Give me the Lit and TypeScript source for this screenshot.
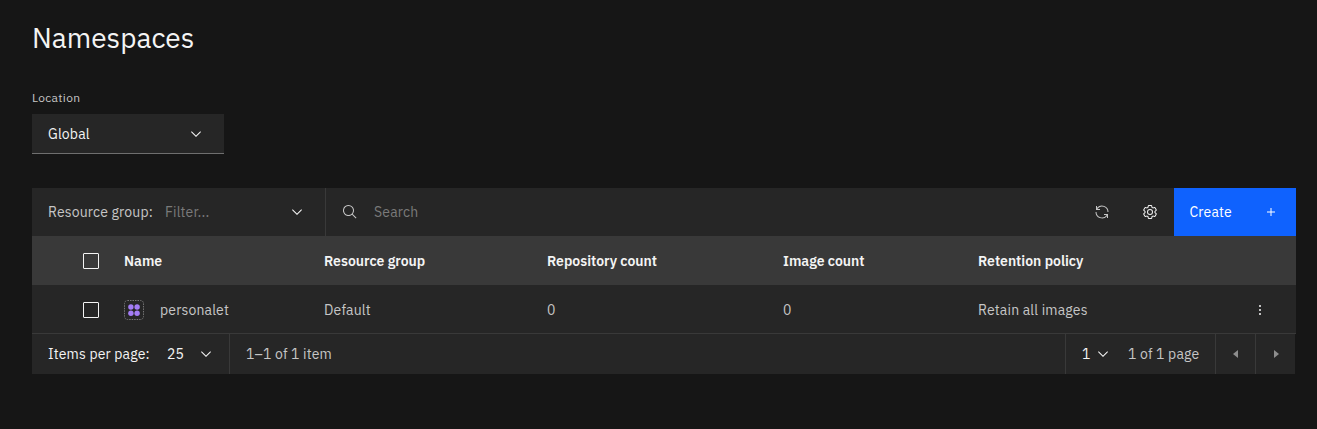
import { LitElement, html, css, svg } from "lit";
import { customElement } from "lit/decorators.js";

const chevron = html`<svg class="icon" viewBox="0 0 16 16"><path d="M8 11L3 6 3.7 5.3 8 9.6 12.3 5.3 13 6z"/></svg>`;
const icon32 = (d: string) => html`<svg class="icon" viewBox="0 0 32 32">${svg`<path d=${d} />`}</svg>`;

const SEARCH = "M29,27.5859l-7.5521-7.5521a11.0177,11.0177,0,1,0-1.4141,1.4141L27.5859,29ZM4,13a9,9,0,1,1,9,9A9.01,9.01,0,0,1,4,13Z";
const RENEW = "M12 10H6.78A11 11 0 0 1 27 16h2A13 13 0 0 0 6 7.68V4H4v8h8zM20 22h5.22A11 11 0 0 1 5 16H3a13 13 0 0 0 23 8.32V28h2V20H20z";
const SETTINGS = "M27,16.76c0-.25,0-.5,0-.76s0-.51,0-.77l1.92-1.68A2,2,0,0,0,29.3,11L26.94,7a2,2,0,0,0-1.73-1,2,2,0,0,0-.64.1l-2.43.82a11.35,11.35,0,0,0-1.31-.75l-.51-2.52a2,2,0,0,0-2-1.61H13.64a2,2,0,0,0-2,1.61l-.51,2.52a11.48,11.48,0,0,0-1.32.75L7.43,6.06A2,2,0,0,0,6.79,6,2,2,0,0,0,5.06,7L2.7,11a2,2,0,0,0,.41,2.51L5,15.24c0,.25,0,.5,0,.76s0,.51,0,.77L3.11,18.45A2,2,0,0,0,2.7,21L5.06,25a2,2,0,0,0,1.73,1,2,2,0,0,0,.64-.1l2.43-.82a11.35,11.35,0,0,0,1.31.75l.51,2.52a2,2,0,0,0,2,1.61h4.72a2,2,0,0,0,2-1.61l.51-2.52a11.48,11.48,0,0,0,1.32-.75l2.42.82a2,2,0,0,0,.64.1,2,2,0,0,0,1.73-1L29.3,21a2,2,0,0,0-.41-2.51ZM25.21,24l-3.43-1.16a8.86,8.86,0,0,1-2.71,1.57L18.36,28H13.64l-.71-3.55a9.36,9.36,0,0,1-2.7-1.57L6.79,24,4.43,20l2.72-2.4a8.9,8.9,0,0,1,0-3.13L4.43,12,6.79,8l3.43,1.16a8.86,8.86,0,0,1,2.71-1.57L13.64,4h4.72l.71,3.55a9.36,9.36,0,0,1,2.7,1.57L25.21,8,27.57,12l-2.72,2.4a8.9,8.9,0,0,1,0,3.13L27.57,20ZM16,22a6,6,0,1,1,6-6A5.94,5.94,0,0,1,16,22Zm0-10a3.91,3.91,0,0,0-4,4,3.91,3.91,0,0,0,4,4,3.91,3.91,0,0,0,4-4A3.91,3.91,0,0,0,16,12Z";
const ADD = "M17 15V8h-2v7H8v2h7v7h2v-7h7v-2z";
const CARET_LEFT = "M20 24L10 16 20 8z";
const CARET_RIGHT = "M12 8L22 16 12 24z";

@customElement("app-root")
export class AppRoot extends LitElement {
  static styles = css`
    :host {
      display: block;
      box-sizing: border-box;
      height: 429px;
      padding: 20px 21px 0 32px;
      background: #161616;
      color: #f4f4f4;
      font: 14px/18px "IBM Plex Sans", Roboto, "Liberation Sans", sans-serif;
      letter-spacing: 0.16px;
      white-space: nowrap;
      overflow: hidden;
    }
    * { box-sizing: border-box; }
    .icon { display: block; width: 16px; height: 16px; fill: currentColor; flex: none; }
    h1 { margin: 0; font-size: 28px; line-height: 36px; font-weight: 400; letter-spacing: 0; }
    .label { margin: 34px 0 8px; font-size: 12px; line-height: 16px; color: #c6c6c6; letter-spacing: 0.32px; }
    .select {
      display: flex; align-items: center; justify-content: space-between;
      width: 192px; height: 40px; padding: 0 20px 0 16px;
      background: #262626; border-bottom: 1px solid #6f6f6f;
    }
    .toolbar { display: flex; margin-top: 34px; height: 48px; background: #262626; }
    .filter {
      display: flex; align-items: center; width: 294px; padding: 0 20px 0 16px;
      border-right: 1px solid #393939; color: #c6c6c6;
    }
    .filter-name { width: 117px; }
    .placeholder { flex: 1; color: #7a7a7a; }
    .filter .icon { color: #f4f4f4; }
    .search { flex: 1; display: flex; align-items: center; gap: 16px; padding-left: 16px; color: #c6c6c6; }
    .tool { width: 48px; display: grid; place-items: center; color: #c6c6c6; }
    .tool.strong { color: #f4f4f4; }
    .create {
      display: flex; align-items: center; justify-content: space-between;
      width: 122px; padding: 0 17px 0 15.5px; background: #0f62fe; color: #fff;
    }
    .row {
      display: grid; align-items: center; height: 48px; padding-top: 2px;
      grid-template-columns: 92px 200px 223px 236px 195px 1fr 48px;
      background: #262626; color: #c6c6c6;
    }
    .row.head {
      height: 49px; padding-top: 0; background: #393939; color: #f4f4f4;
      font-weight: 600; letter-spacing: 0;
    }
    .check { width: 16px; height: 16px; margin-left: 51px; border: 1px solid #f4f4f4; border-radius: 1px; }
    .name { display: flex; align-items: center; gap: 16px; }
    .ns { width: 20px; height: 20px; display: block; }
    .menu { margin-left: 4px; color: #f4f4f4; }
    .line { height: 1px; background: #393939; }
    .pager { display: flex; height: 40px; margin-right: 1px; background: #262626; color: #c6c6c6; }
    .pager > div { display: flex; align-items: center; }
    .per { width: 198px; padding: 0 15px 0 16px; border-right: 1px solid #393939; color: #f4f4f4; }
    .per-name { width: 119px; }
    .per-size { width: 31px; }
    .range { flex: 1; padding-left: 16px; }
    .pages { width: 150px; padding-left: 16px; border-left: 1px solid #393939; }
    .page-no { width: 13px; color: #f4f4f4; }
    .pages .icon { color: #f4f4f4; }
    .page-of { margin-left: 17px; }
    .pager > .nav { width: 40px; justify-content: center; border-left: 1px solid #393939; color: #8d8d8d; }
  `;

  render() {
    return html`
      <h1>Namespaces</h1>
      <div class="label">Location</div>
      <div class="select"><span>Global</span>${chevron}</div>

      <div class="toolbar">
        <div class="filter">
          <span class="filter-name">Resource group:</span>
          <span class="placeholder">Filter...</span>
          ${chevron}
        </div>
        <div class="search">${icon32(SEARCH)}<span class="placeholder">Search</span></div>
        <div class="tool">${icon32(RENEW)}</div>
        <div class="tool strong">${icon32(SETTINGS)}</div>
        <div class="create"><span>Create</span>${icon32(ADD)}</div>
      </div>

      <div class="row head">
        <span class="check"></span>
        <span>Name</span>
        <span>Resource group</span>
        <span>Repository count</span>
        <span>Image count</span>
        <span>Retention policy</span>
        <span></span>
      </div>
      <div class="row">
        <span class="check"></span>
        <span class="name">
          <svg class="ns" viewBox="0 0 20 20">
            <rect x="0.5" y="0.5" width="19" height="19" rx="3" fill="none" stroke="#777" stroke-dasharray="1.5 1"/>
            <g fill="#a37cf5">
              <circle cx="6.9" cy="7" r="2.7"/><circle cx="13.1" cy="7" r="2.7"/>
              <circle cx="6.9" cy="13.2" r="2.7"/><circle cx="13.1" cy="13.2" r="2.7"/>
            </g>
          </svg>
          <span>personalet</span>
        </span>
        <span>Default</span>
        <span>0</span>
        <span>0</span>
        <span>Retain all images</span>
        <svg class="icon menu" viewBox="0 0 32 32">
          <circle cx="16" cy="8" r="2"/><circle cx="16" cy="16" r="2"/><circle cx="16" cy="24" r="2"/>
        </svg>
      </div>
      <div class="line"></div>
      <div class="pager">
        <div class="per">
          <span class="per-name">Items per page:</span><span class="per-size">25</span>${chevron}
        </div>
        <div class="range">1–1 of 1 item</div>
        <div class="pages"><span class="page-no">1</span>${chevron}<span class="page-of">1 of 1 page</span></div>
        <div class="nav">${icon32(CARET_LEFT)}</div>
        <div class="nav">${icon32(CARET_RIGHT)}</div>
      </div>
    `;
  }
}
